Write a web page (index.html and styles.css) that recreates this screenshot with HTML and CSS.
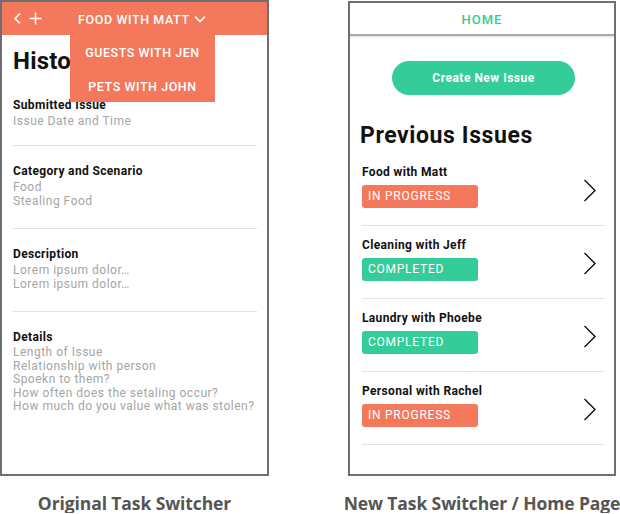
FILE: index.html
```html
<!DOCTYPE html>
<html>
<head>
<meta charset="utf-8">
<link rel="stylesheet" href="styles.css">
</head>
<body>
<div class="board">
  <div class="col">
    <div class="phone">
      <div class="topbar">
        <div class="tb-icons">
          <svg width="9" height="13" viewBox="0 0 9 13"><path d="M7 1.5 L2 6.5 L7 11.5" fill="none" stroke="#fff" stroke-width="1.6"/></svg>
          <svg width="13" height="13" viewBox="0 0 13 13"><path d="M6.5 0.5 V12.5 M0.5 6.5 H12.5" fill="none" stroke="#fff" stroke-width="1.5"/></svg>
        </div>
        <div class="tb-title">FOOD WITH MATT
          <svg width="12" height="8" viewBox="0 0 12 8"><path d="M1 1.5 L6 6.5 L11 1.5" fill="none" stroke="#fff" stroke-width="1.7"/></svg>
        </div>
        <div class="dropdown">
          <div class="dd-item">GUESTS WITH JEN</div>
          <div class="dd-item">PETS WITH JOHN</div>
        </div>
      </div>
      <div class="hist">
        <h1 class="hist-title">History</h1>
        <div class="sec first">
          <div class="lbl">Submitted Issue</div>
          <div class="val">Issue Date and Time</div>
        </div>
        <div class="sec">
          <div class="lbl">Category and Scenario</div>
          <div class="val">Food</div>
          <div class="val">Stealing Food</div>
        </div>
        <div class="sec">
          <div class="lbl">Description</div>
          <div class="val">Lorem ipsum dolor…</div>
          <div class="val">Lorem ipsum dolor…</div>
        </div>
        <div class="sec last">
          <div class="lbl">Details</div>
          <div class="val">Length of Issue</div>
          <div class="val">Relationship with person</div>
          <div class="val">Spoekn to them?</div>
          <div class="val">How often does the setaling occur?</div>
          <div class="val">How much do you value what was stolen?</div>
        </div>
      </div>
    </div>
    <div class="caption">Original Task Switcher</div>
  </div>

  <div class="col right">
    <div class="phone">
      <div class="homebar">HOME</div>
      <div class="home">
        <div class="btn-row"><div class="btn">Create New Issue</div></div>
        <h1 class="prev-title">Previous Issues</h1>
        <div class="items">
          <div class="item">
            <div class="item-main">
              <div class="item-title">Food with Matt</div>
              <div class="badge prog">IN PROGRESS</div>
            </div>
            <svg class="chev" width="14" height="23" viewBox="0 0 14 23"><path d="M1.5 1 L12 11.5 L1.5 22" fill="none" stroke="#111" stroke-width="1.4"/></svg>
          </div>
          <div class="item">
            <div class="item-main">
              <div class="item-title">Cleaning with Jeff</div>
              <div class="badge done">COMPLETED</div>
            </div>
            <svg class="chev" width="14" height="23" viewBox="0 0 14 23"><path d="M1.5 1 L12 11.5 L1.5 22" fill="none" stroke="#111" stroke-width="1.4"/></svg>
          </div>
          <div class="item">
            <div class="item-main">
              <div class="item-title">Laundry with Phoebe</div>
              <div class="badge done">COMPLETED</div>
            </div>
            <svg class="chev" width="14" height="23" viewBox="0 0 14 23"><path d="M1.5 1 L12 11.5 L1.5 22" fill="none" stroke="#111" stroke-width="1.4"/></svg>
          </div>
          <div class="item">
            <div class="item-main">
              <div class="item-title">Personal with Rachel</div>
              <div class="badge prog">IN PROGRESS</div>
            </div>
            <svg class="chev" width="14" height="23" viewBox="0 0 14 23"><path d="M1.5 1 L12 11.5 L1.5 22" fill="none" stroke="#111" stroke-width="1.4"/></svg>
          </div>
        </div>
      </div>
    </div>
    <div class="caption">New Task Switcher / Home Page</div>
  </div>
</div>
</body>
</html>
```

FILE: styles.css
```css
* { box-sizing: border-box; }
html, body { margin: 0; padding: 0; background: #fff; }
body { font-family: Roboto, "Liberation Sans", sans-serif; color: #111; }

.board { display: flex; gap: 79px; }
.col { display: flex; flex-direction: column; width: 269px; }
.col.right { width: 268px; padding-top: 1px; }

.phone {
  height: 476px;
  border: 2px solid #6f6f6f;
  position: relative;
  overflow: hidden;
  background: #fff;
}
.col.right .phone { height: 475px; }

/* left phone */
.topbar {
  height: 33px;
  background: #f4785b;
  position: relative;
  display: flex;
  align-items: center;
  color: #fff;
}
.tb-icons { display: flex; align-items: center; gap: 7px; padding-left: 11px; width: 76px; }
.tb-title {
  font-size: 12.5px;
  font-weight: 500;
  letter-spacing: 0.6px;
  display: flex;
  align-items: center;
  gap: 4px;
  padding-top: 1px;
}
.dropdown {
  position: absolute;
  left: 68px;
  top: 33px;
  width: 145px;
  height: 67px;
  background: #f4785b;
  z-index: 2;
  display: flex;
  flex-direction: column;
  align-items: center;
  padding-top: 10px;
  gap: 18px;
}
.dd-item {
  color: #fff;
  font-size: 12.5px;
  font-weight: 500;
  letter-spacing: 0.55px;
  line-height: 16px;
}

.hist { padding: 0 10px 0 10px; }
.hist-title {
  margin: 0;
  font-size: 24px;
  font-weight: 700;
  line-height: 28px;
  padding-top: 12px;
  padding-left: 1px;
  letter-spacing: 0.2px;
}
.sec {
  padding: 17px 0 20px 1px;
  border-bottom: 1px solid #e2e2e2;
}
.sec.first { padding-top: 22px; padding-bottom: 17px; }
.sec.last { border-bottom: none; }
.lbl {
  font-size: 12px;
  font-weight: 700;
  letter-spacing: 0.35px;
  line-height: 16px;
  margin-bottom: 1px;
}
.val {
  font-size: 12px;
  color: #a5a5a5;
  letter-spacing: 0.5px;
  line-height: 14px;
}
.sec.last .val { line-height: 13.6px; }

/* right phone */
.homebar {
  height: 33px;
  display: flex;
  align-items: center;
  justify-content: center;
  color: #34cc98;
  font-size: 13px;
  font-weight: 500;
  letter-spacing: 1px;
  border-bottom: 2px solid #a9a9a9;
  box-shadow: 0 1px 2px rgba(0,0,0,0.15);
  padding-top: 1px;
}
.home { padding: 0 9px 0 10px; }
.btn-row { display: flex; justify-content: center; padding-top: 25px; padding-left: 2px; }
.btn {
  width: 183px;
  height: 34px;
  border-radius: 17px;
  background: #34cc98;
  color: #fff;
  font-size: 12px;
  font-weight: 700;
  letter-spacing: 0.5px;
  display: flex;
  align-items: center;
  justify-content: center;
}
.prev-title {
  margin: 0;
  padding-top: 27px;
  font-size: 23px;
  font-weight: 700;
  line-height: 28px;
  letter-spacing: 0.6px;
}
.items { padding-left: 2px; padding-top: 3px; }
.item {
  display: flex;
  align-items: center;
  justify-content: space-between;
  padding: 11px 8px 17px 0;
  border-bottom: 1px solid #e2e2e2;
}
.item-title {
  font-size: 12px;
  font-weight: 700;
  letter-spacing: 0.35px;
  line-height: 16px;
  margin-bottom: 5px;
}
.badge {
  width: 116px;
  height: 23px;
  border-radius: 3px;
  color: #fff;
  font-size: 12px;
  letter-spacing: 0.75px;
  line-height: 23px;
  padding-left: 6px;
}
.badge.prog { background: #f4785b; }
.badge.done { background: #34cc98; }
.chev { margin-top: 8px; }

.caption {
  margin-top: 17px;
  text-align: center;
  font-family: "Open Sans", "Liberation Sans", sans-serif;
  font-weight: 700;
  font-size: 17.5px;
  color: #555;
  letter-spacing: -0.1px;
  line-height: 20px;
}
.col.right .caption { margin-left: -10px; margin-right: -10px; }
```
